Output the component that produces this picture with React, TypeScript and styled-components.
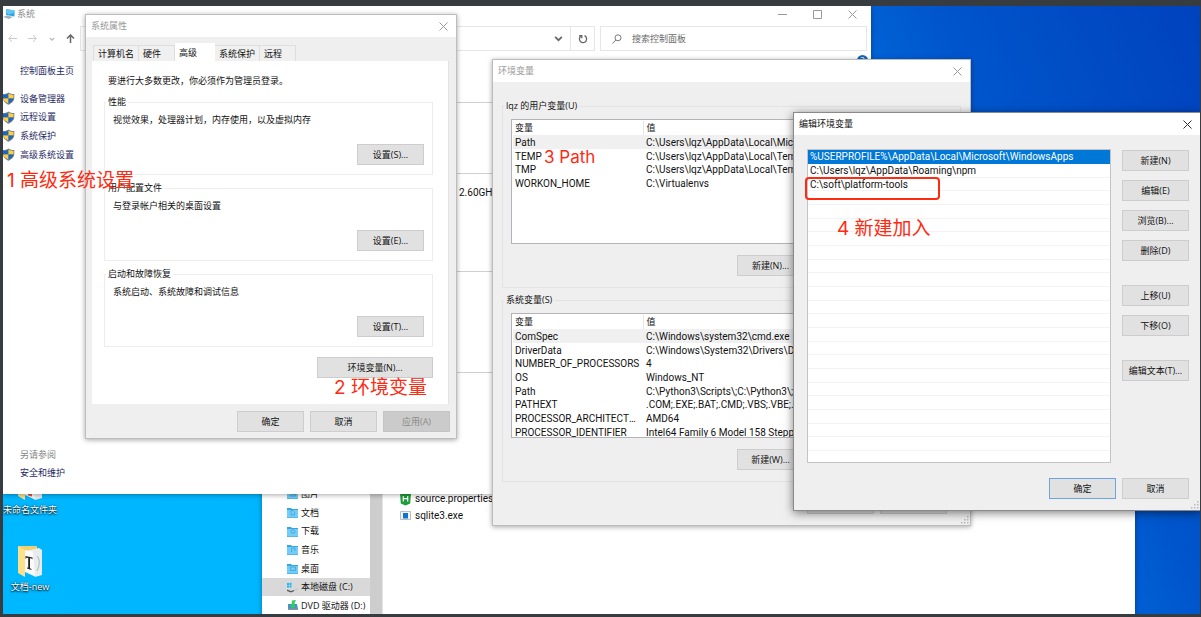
import React from "react";
import styled, { createGlobalStyle, css } from "styled-components";

const GlobalStyle = createGlobalStyle`
  *, *::before, *::after { box-sizing: border-box; }
  body {
    margin: 0;
    font-family: "Open Sans", "Noto Sans CJK SC", sans-serif;
    font-size: 9px;
    line-height: 12px;
    color: #111;
  }
  button, input { font: inherit; color: inherit; }
  ul { list-style: none; margin: 0; padding: 0; }
  h2 { margin: 0; font: inherit; }
  p { margin: 0; }
  a { color: inherit; text-decoration: none; }
  svg { display: block; flex: none; }
`;

/* names, paths and values are set in a slightly larger Latin face */
const dataText = css`
  font-family: Roboto, "Noto Sans CJK SC", sans-serif;
  font-size: 10px;
`;

const Frame = styled.main`
  height: 100vh;
  padding: 6px 1px 3px 3px;
  background: #373c40;
`;

const Desktop = styled.div`
  position: relative;
  height: 100%;
  overflow: hidden;
  background: linear-gradient(66deg, #00b8ff 0%, #00b4ff 30%, #0062d6 76%, #0055cc 82%, #0042bd 100%);
`;

/* ---------- windows ---------- */

const WindowFrame = styled.section<{ $x: number; $y: number; $w: number; $h?: number; $active?: boolean }>`
  position: absolute;
  left: ${(p) => p.$x}px;
  top: ${(p) => p.$y}px;
  width: ${(p) => p.$w}px;
  height: ${(p) => (p.$h ? `${p.$h}px` : "auto")};
  display: flex;
  flex-direction: column;
  overflow: hidden;
  background: #fff;
  box-shadow: 0 1px 5px rgba(0, 0, 0, 0.35);
`;

const DialogFrame = styled(WindowFrame)`
  background: #efefef;
  border: 1px solid ${(p) => (p.$active ? "#8a8a8a" : "#bdbdbd")};
  box-shadow: ${(p) => (p.$active ? "0 2px 9px rgba(0,0,0,.5)" : "0 1px 5px rgba(0,0,0,.35)")};
`;

const TitleBar = styled.header<{ $active?: boolean }>`
  display: flex;
  align-items: center;
  justify-content: space-between;
  flex: none;
  height: 22px;
  padding: 0 8px 0 5px;
  background: #fff;
  color: ${(p) => (p.$active ? "#111" : "#999")};
`;

const IconButton = styled.button`
  display: flex;
  padding: 0;
  border: 0;
  background: none;
`;

const PushButton = styled.button<{ $w?: number; $primary?: boolean }>`
  flex: none;
  width: ${(p) => p.$w ?? 67}px;
  height: 21px;
  padding: 0;
  border: 1px solid ${(p) => (p.$primary ? "#6ba4e0" : "#cdcdcd")};
  background: #e1e1e1;
  white-space: nowrap;
  &:disabled {
    background: #cbcbcb;
    border-color: #c4c4c4;
    color: #8b8b8b;
  }
`;

const ButtonRow = styled.div`
  display: flex;
  justify-content: flex-end;
  gap: 6px;
`;

const Grip = styled.div`
  position: absolute;
  right: 1px;
  bottom: 1px;
`;

/* ---------- system window ---------- */

const SystemTitle = styled.header`
  display: flex;
  align-items: center;
  justify-content: space-between;
  height: 20px;
  padding: 0 14px 4px 0;
  color: #8c8c8c;
`;

const TitleLabel = styled.div`
  display: flex;
  align-items: center;
  gap: 2px;
`;

const Caption = styled.div`
  display: flex;
  gap: 26px;
`;

const Toolbar = styled.div`
  display: flex;
  align-items: center;
  gap: 5px;
  height: 25px;
  padding-right: 4px;
`;

const NavButtons = styled.div`
  display: flex;
  align-items: center;
  justify-content: space-between;
  width: 72px;
  padding: 0 0 0 5px;
`;

const AddressBar = styled.div`
  display: flex;
  flex: 1;
  align-items: center;
  height: 25px;
  padding-left: 4px;
  border: 1px solid #e6e6e6;
`;

const AddressButton = styled(IconButton)<{ $divided?: boolean }>`
  align-items: center;
  justify-content: center;
  width: 24px;
  height: 23px;
  ${(p) => p.$divided && css`border-left: 1px solid #e6e6e6;`}
`;

const Spacer = styled.div`
  flex: 1;
`;

const SearchBox = styled.label`
  display: flex;
  align-items: center;
  gap: 10px;
  width: 267px;
  height: 25px;
  padding-left: 11px;
  border: 1px solid #e6e6e6;
`;

const SearchInput = styled.input`
  flex: 1;
  min-width: 0;
  padding: 0;
  border: 0;
  outline: 0;
  background: none;
  &::placeholder { color: #6a6a6a; opacity: 1; }
`;

const SystemBody = styled.div`
  display: flex;
  flex: 1;
`;

const SideNav = styled.nav`
  display: flex;
  flex-direction: column;
  width: 180px;
  padding: 14px 0 15px;
  color: #1f2a66;
`;

const SideHome = styled.a`
  padding: 0 17px;
  margin-bottom: 12px;
`;

const SideLink = styled.a`
  display: flex;
  align-items: center;
  gap: 5px;
  height: 19px;
  &:nth-of-type(3n) { height: 18px; }
`;

const SideFooter = styled.div`
  display: flex;
  flex-direction: column;
  gap: 6px;
  margin-top: auto;
  padding: 0 17px;
`;

const Muted = styled.span`
  color: #858585;
`;

const SystemMain = styled.div`
  position: relative;
  flex: 1;
`;

const InfoSection = styled.div<{ $h: number }>`
  ${dataText}
  height: ${(p) => p.$h}px;
  padding: 13px 0 0 276px;
  border-bottom: 1px solid #cfcfcf;
`;

const HelpBadge = styled.button`
  position: absolute;
  top: 4px;
  right: 3px;
  width: 11px;
  height: 11px;
  padding: 0;
  border: 0;
  border-radius: 50%;
  background: #1267b4;
  color: #fff;
  line-height: 11px;
`;

/* ---------- system properties ---------- */

const PropsBody = styled.div`
  display: flex;
  flex-direction: column;
  flex: 1;
  padding: 6px 6px 0;
`;

const TabStrip = styled.div`
  display: flex;
  align-items: flex-end;
  height: 18px;
  padding-left: 1px;
`;

const Tab = styled.button<{ $active?: boolean }>`
  min-width: 36px;
  height: ${(p) => (p.$active ? 18 : 16)}px;
  padding: 0 4px;
  border: 1px solid #dedede;
  border-width: 1px 1px 0 0;
  background: #f0f0f0;
  text-align: left;
  &:first-child { border-left-width: 1px; }
  ${(p) => p.$active && css`
    min-width: 40px;
    background: #fff;
    border-color: #fff;
  `}
`;

const TabPanel = styled.div`
  display: flex;
  flex-direction: column;
  height: 343px;
  margin-right: 1px;
  padding: 14px 15px 0 12px;
  background: #fff;
  border-right: 1px solid #e2e2e2;
`;

const Notice = styled.p`
  padding: 0 0 0 4px;
  margin-bottom: 9px;
`;

const Group = styled.fieldset<{ $h: number; $line?: string }>`
  display: flex;
  flex-direction: column;
  min-width: 0;
  height: ${(p) => p.$h}px;
  margin: 0;
  padding: 0 1px;
  border: 1px solid ${(p) => p.$line ?? "#ededed"};
`;

const Legend = styled.legend`
  padding: 0 2px;
`;

const SettingBody = styled.div`
  display: flex;
  flex-direction: column;
  justify-content: space-between;
  align-items: flex-end;
  height: 57px;
  padding: 6px 7px 0;
`;

const SettingText = styled.p`
  align-self: flex-start;
`;

const Groups = styled.div`
  display: flex;
  flex-direction: column;
  gap: 7px;
  margin-bottom: 10px;
`;

const PropsFooter = styled(ButtonRow)`
  padding-top: 7px;
`;

/* ---------- environment variables ---------- */

const EnvBody = styled.div`
  display: flex;
  flex-direction: column;
  gap: 6px;
  padding: 18px 9px 0;
`;

const EnvGroupBody = styled.div`
  display: flex;
  flex-direction: column;
  gap: 11px;
  padding: 7px 9px 0 7px;
`;

const TableBox = styled.div`
  height: 125px;
  overflow: hidden;
  padding: 1px 0 0 1px;
  border: 1px solid #b4b4b8;
  background: #fff;
`;

const VarTable = styled.table`
  width: 100%;
  table-layout: fixed;
  border-collapse: collapse;
  ${dataText}
  line-height: 13px;
  th, td {
    padding: 0 3px 0 2px;
    overflow: hidden;
    white-space: nowrap;
    text-overflow: ellipsis;
    text-align: left;
    font-weight: 400;
  }
  th { height: 14px; font-size: 9px; }
  th + th { border-left: 1px solid #e6e6e6; }
  td + td, th + th { padding-left: 3px; }
  tbody tr { height: 14px; }
  tbody tr:nth-child(3n) { height: 13px; }
  tbody tr:first-child { background: #f0f0f0; }
`;

const EnvFooter = styled(ButtonRow)`
  padding: 5px 14px 0 0;
`;

/* ---------- edit dialog ---------- */

const EditBody = styled.div`
  display: flex;
  gap: 11px;
  padding: 14px 11px 0 13px;
`;

const PathList = styled.ul`
  flex: 1;
  height: 314px;
  overflow: hidden;
  border: 1px solid #c4c4c8;
  background: #fff;
  ${dataText}
  line-height: 14px;
`;

const PathItem = styled.li<{ $selected?: boolean }>`
  height: 14px;
  padding: 0 2px;
  border-bottom: 1px solid #f3f3f3;
  white-space: nowrap;
  &:nth-child(3n) { height: 13px; }
  ${(p) => p.$selected && css`
    background: #0078d7;
    border-color: #0078d7;
    color: #fff;
  `}
`;

const EditActions = styled.div`
  display: flex;
  flex-direction: column;
  gap: 24px;
  padding-top: 1px;
`;

const ActionGroup = styled.div`
  display: flex;
  flex-direction: column;
  gap: 9px;
`;

const EditFooter = styled(ButtonRow)`
  padding: 15px 11px 0 0;
`;

/* ---------- file explorer and desktop icons ---------- */

const ExplorerBody = styled.div`
  display: flex;
  height: 100%;
`;

const Tree = styled.ul`
  width: 108px;
`;

const TreeItem = styled.li<{ $selected?: boolean }>`
  display: flex;
  align-items: center;
  gap: 3px;
  height: 19px;
  padding-left: 25px;
  white-space: nowrap;
  background: ${(p) => (p.$selected ? "#d9d9d9" : "transparent")};
  &:nth-child(3n) { height: 18px; }
`;

const ScrollTrack = styled.div`
  width: 13px;
  background: #cdcdcd;
  border-right: 1px solid #e6e6e6;
`;

const Files = styled.ul`
  flex: 1;
  padding: 6px 0 0 17px;
`;

const FileItem = styled.li`
  display: flex;
  align-items: center;
  gap: 4px;
  height: 17px;
  ${dataText}
`;

const DesktopIcon = styled.a<{ $y: number }>`
  position: absolute;
  left: -13px;
  top: ${(p) => p.$y}px;
  display: flex;
  flex-direction: column;
  align-items: center;
  gap: 3px;
  width: 80px;
  color: #fff;
  text-shadow: 0 1px 2px #000, 0 0 2px rgba(0, 0, 0, 0.7);
`;

/* ---------- annotations ---------- */

const Note = styled.span<{ $x: number; $y: number; $latin?: boolean }>`
  position: absolute;
  left: ${(p) => p.$x}px;
  top: ${(p) => p.$y}px;
  font-family: Inter, "Noto Sans CJK SC", sans-serif;
  font-size: ${(p) => (p.$latin ? 17 : 19)}px;
  line-height: 24px;
  white-space: nowrap;
  color: #ff2a10;
`;

const Highlight = styled.div`
  position: absolute;
  left: 802px;
  top: 171px;
  width: 135px;
  height: 23px;
  border: 2px solid #ff2a10;
  border-radius: 4px;
`;

/* ---------- icons ---------- */

const CloseIcon = ({ color = "#999" }: { color?: string }) => (
  <svg width="9" height="9" viewBox="0 0 9 9" stroke={color} fill="none"><path d="M.5.5l8 8M8.5.5l-8 8" /></svg>
);

const ShieldIcon = () => (
  <svg width="12" height="13" viewBox="0 0 12 13">
    <path d="M5.500 .5C4 1.700 2 2 0 2v4c0 3 2.500 5.500 5.500 6.700C8.500 11.500 11.300 9 11.300 6V2C9 2 7 1.700 5.500.5z" fill="#6f7f91" />
    <path d="M5.500 1.600V6.500H0V3C2.500 3 4 2.600 5.500 1.600z" fill="#1c68c0" />
    <path d="M5.500 1.600V6.500h5V3C8.500 3 7 2.600 5.500 1.600z" fill="#ffcf3e" />
    <path d="M0 6.500h5.500v5C3 10.400.5 8.800 0 6.500z" fill="#ffcf3e" />
    <path d="M5.500 6.500h5c-.4 2.300-2.500 3.900-5 5z" fill="#1c68c0" />
  </svg>
);

const PcIcon = () => (
  <svg width="12" height="12" viewBox="0 0 12 12">
    <path d="M3 1l8.500 1.500v6L3 7z" fill="#27a5e4" />
    <path d="M3 1l8.500 1.500v2L6 6.500 3 5z" fill="#63c5f2" />
    <path d="M0 9l4-1.500 6 1.500-4 2z" fill="#a4b2bd" />
  </svg>
);

const ArrowIcon = ({ dir, color }: { dir: "left" | "right" | "up"; color: string }) => (
  <svg width="9" height="9" viewBox="0 0 9 9" fill="none" stroke={color} strokeWidth={dir === "up" ? 1.5 : 1}>
    {dir === "left" && <path d="M9 4.500H1M4 1L.8 4.500 4 8" />}
    {dir === "right" && <path d="M0 4.500h8M5 1l3.200 3.500L5 8" />}
    {dir === "up" && <path d="M4.500 9V1M1 4.500L4.500 1 8 4.500" />}
  </svg>
);

const ChevronIcon = ({ size, color, weight }: { size: number; color: string; weight: number }) => (
  <svg width={size} height={size} viewBox="0 0 8 8" fill="none" stroke={color} strokeWidth={weight}>
    <path d="M1 2.500l3 3 3-3" />
  </svg>
);

const RefreshIcon = () => (
  <svg width="10" height="10" viewBox="0 0 10 10" fill="none" stroke="#666" strokeWidth="1.300">
    <path d="M6.500 1.700A3.600 3.600 0 1 1 3 2M1.200 1.600h2.600v2.600" />
  </svg>
);

const SearchIcon = () => (
  <svg width="10" height="10" viewBox="0 0 10 10" fill="none" stroke="#777">
    <circle cx="6" cy="3.800" r="3" /><path d="M3.900 6L.5 9.500" />
  </svg>
);

const GripIcon = () => (
  <svg width="8" height="8" viewBox="0 0 8 8" fill="#b8b8b8">
    <path d="M6 0h1.500v1.500H6zM6 3h1.500v1.500H6zM6 6h1.500v1.500H6zM3 3h1.500v1.500H3zM3 6h1.500v1.500H3zM0 6h1.500v1.500H0z" />
  </svg>
);

const glyphs: Record<string, string> = {
  picture: "M3 8l2-2.500L7 7l1-1 1 2z",
  doc: "M4 3.500h2l1.500 1.500v3H4z",
  download: "M4 5.500a2 1.800 0 1 0 4 0 2 1.800 0 1 0-4 0z",
  music: "M4.500 8V4.500L8 3.800V7",
  desktop: "M3.500 4h5v3.500h-5z",
};

const TreeIcon = ({ kind }: { kind: string }) => {
  if (kind === "disk")
    return (
      <svg width="11" height="11" viewBox="0 0 11 11">
        <path d="M0 1h2v2H0zM2.500.7h2V3h-2zM0 3.500h2v2H0zM2.500 3.500h2v2h-2z" fill="#1fb6f5" />
        <path d="M0 7.500l4 1.500 7-3V5L6 6.500z" fill="#d4d8db" /><path d="M0 7.500V9l4 1.500 3-1.200V8L4 9z" fill="#555d63" />
        <path d="M7 8v1.300L11 7.500V6z" fill="#c3c8cc" />
      </svg>
    );
  if (kind === "dvd")
    return (
      <svg width="11" height="11" viewBox="0 0 11 11">
        <path d="M1 4h9l1 5H1z" fill="#4a90c9" /><path d="M1 8.500h10V10H1z" fill="#8696a5" />
        <path d="M5 .5L9 0 7.500 3v3H9L5.500 8.500 3 5.500h1.500z" fill="#2bd158" />
      </svg>
    );
  return (
    <svg width="11" height="11" viewBox="0 0 11 11">
      <path d="M0 1h4l1 1h6v9H0z" fill="#35a4df" /><path d="M0 3h11v7.500H0z" fill="#74cdf6" />
      <path d={glyphs[kind]} fill="none" stroke="#2b93cf" strokeWidth=".6" />
    </svg>
  );
};

const PropertiesIcon = () => (
  <svg width="11" height="14" viewBox="0 0 11 14">
    <path d="M0 1h11l-.8 10.500L5.500 13.500.8 11.500z" fill="#1e9e3a" />
    <path d="M3.300 4v5.500M7.700 4v5.500M3.300 6.700h4.400" stroke="#fff" strokeWidth="1.200" />
  </svg>
);

const ExeIcon = () => (
  <svg width="11" height="9" viewBox="0 0 11 9">
    <path d="M.5.500h10v8H.5z" fill="#f4f4f4" stroke="#b9bdc0" /><path d="M3 2h5v5.500H3z" fill="#0c74d4" />
  </svg>
);

const FolderIcon = ({ letter }: { letter?: boolean }) => (
  <svg width="26" height="34" viewBox="0 0 26 34">
    <path d="M1 2h19v26H7z" fill="#f0cf6e" />
    <path d="M8 7l14-3 3 2v25l-7 2z" fill="#e9eced" />
    <path d="M7 6l9 1.500 2 25L8 28z" fill="#fbfbfb" />
    <path d="M1 2l7 4v27l-7-4z" fill="#ffe08a" />
    {letter
      ? <path d="M8.500 12l7 1.500v2l-1-1-1.500-.2v10l1.500.7v1l-4.500-1.500v-1l1.200.2V13.800l-1.700-.1-1 1.200z" fill="#222" />
      : <path d="M11 25l4 1.500v3l-4-1z" fill="#e2574c" />}
    <path d="M20 12c3 3 3 9 0 15" fill="none" stroke="#a9b4ba" />
  </svg>
);

/* ---------- data ---------- */

const userVars = [
  ["Path", "C:\\Users\\lqz\\AppData\\Local\\Microsoft\\WindowsApps"],
  ["TEMP", "C:\\Users\\lqz\\AppData\\Local\\Temp"],
  ["TMP", "C:\\Users\\lqz\\AppData\\Local\\Temp"],
  ["WORKON_HOME", "C:\\Virtualenvs"],
];

const systemVars = [
  ["ComSpec", "C:\\Windows\\system32\\cmd.exe"],
  ["DriverData", "C:\\Windows\\System32\\Drivers\\DriverData"],
  ["NUMBER_OF_PROCESSORS", "4"],
  ["OS", "Windows_NT"],
  ["Path", "C:\\Python3\\Scripts\\;C:\\Python3\\;C:\\Windows"],
  ["PATHEXT", ".COM;.EXE;.BAT;.CMD;.VBS;.VBE;.JS;.JSE"],
  ["PROCESSOR_ARCHITECTURE", "AMD64"],
  ["PROCESSOR_IDENTIFIER", "Intel64 Family 6 Model 158 Stepping 10"],
];

const pathEntries = [
  "%USERPROFILE%\\AppData\\Local\\Microsoft\\WindowsApps",
  "C:\\Users\\lqz\\AppData\\Roaming\\npm",
  "C:\\soft\\platform-tools",
  ...Array<string>(20).fill(""),
];

const settings = [
  ["性能", "视觉效果，处理器计划，内存使用，以及虚拟内存", "设置(S)..."],
  ["用户配置文件", "与登录帐户相关的桌面设置", "设置(E)..."],
  ["启动和故障恢复", "系统启动、系统故障和调试信息", "设置(T)..."],
];

const tree = [
  ["picture", "图片"], ["doc", "文档"], ["download", "下载"], ["music", "音乐"],
  ["desktop", "桌面"], ["disk", "本地磁盘 (C:)"], ["dvd", "DVD 驱动器 (D:)"],
];

const sideLinks = ["设备管理器", "远程设置", "系统保护", "高级系统设置"];
const tabs = ["计算机名", "硬件", "高级", "系统保护", "远程"];

/* ---------- parts ---------- */

const Variables = ({ title, rows, keys }: { title: string; rows: string[][]; keys: string[] }) => (
  <Group $h={188} $line="#e3e3e3">
    <Legend>{title}</Legend>
    <EnvGroupBody>
      <TableBox>
        <VarTable>
          <colgroup><col width="130" /><col /></colgroup>
          <thead><tr><th>变量</th><th>值</th></tr></thead>
          <tbody>
            {rows.map(([name, value]) => <tr key={name}><td>{name}</td><td>{value}</td></tr>)}
          </tbody>
        </VarTable>
      </TableBox>
      <ButtonRow>
        {keys.map((k) => <PushButton key={k}>{k}</PushButton>)}
      </ButtonRow>
    </EnvGroupBody>
  </Group>
);

const Explorer = () => (
  <WindowFrame $x={259} $y={478} $w={873} $h={160}>
    <ExplorerBody>
      <Tree>
        {tree.map(([kind, label]) => (
          <TreeItem key={label} $selected={kind === "disk"}><TreeIcon kind={kind} />{label}</TreeItem>
        ))}
      </Tree>
      <ScrollTrack />
      <Files>
        <FileItem><PropertiesIcon />source.properties</FileItem>
        <FileItem><ExeIcon />sqlite3.exe</FileItem>
      </Files>
    </ExplorerBody>
  </WindowFrame>
);

const SystemWindow = () => (
  <WindowFrame $x={0} $y={0} $w={868} $h={488}>
    <SystemTitle>
      <TitleLabel><PcIcon /><h2>系统</h2></TitleLabel>
      <Caption>
        <IconButton aria-label="最小化"><svg width="9" height="9" stroke="#999"><path d="M0 4.500h9" /></svg></IconButton>
        <IconButton aria-label="最大化"><svg width="9" height="9" stroke="#999" fill="none"><path d="M.5.500h8v8h-8z" /></svg></IconButton>
        <IconButton aria-label="关闭"><CloseIcon /></IconButton>
      </Caption>
    </SystemTitle>
    <Toolbar>
      <NavButtons>
        <IconButton aria-label="后退"><ArrowIcon dir="left" color="#c9c9c9" /></IconButton>
        <IconButton aria-label="前进"><ArrowIcon dir="right" color="#c9c9c9" /></IconButton>
        <IconButton aria-label="历史"><ChevronIcon size={6} color="#b5b5b5" weight={1.5} /></IconButton>
        <IconButton aria-label="向上"><ArrowIcon dir="up" color="#666" /></IconButton>
      </NavButtons>
      <AddressBar>
        <PcIcon />
        <Spacer />
        <AddressButton aria-label="展开"><ChevronIcon size={9} color="#666" weight={1.5} /></AddressButton>
        <AddressButton $divided aria-label="刷新"><RefreshIcon /></AddressButton>
      </AddressBar>
      <SearchBox><SearchIcon /><SearchInput type="text" placeholder="搜索控制面板" aria-label="搜索控制面板" /></SearchBox>
    </Toolbar>
    <SystemBody>
      <SideNav>
        <SideHome href="#">控制面板主页</SideHome>
        {sideLinks.map((l) => <SideLink key={l} href="#"><ShieldIcon />{l}</SideLink>)}
        <SideFooter><Muted>另请参阅</Muted><a href="#">安全和维护</a></SideFooter>
      </SideNav>
      <SystemMain>
        <HelpBadge aria-label="帮助">?</HelpBadge>
        <InfoSection $h={52} />
        <InfoSection $h={71} />
        <InfoSection $h={98}>2.60GHz</InfoSection>
        <InfoSection $h={101} />
      </SystemMain>
    </SystemBody>
  </WindowFrame>
);

const SystemProperties = () => (
  <DialogFrame $x={82} $y={8} $w={372} $h={425}>
    <TitleBar><h2>系统属性</h2><IconButton aria-label="关闭"><CloseIcon /></IconButton></TitleBar>
    <PropsBody>
      <TabStrip role="tablist">
        {tabs.map((t) => <Tab key={t} role="tab" $active={t === "高级"} aria-selected={t === "高级"}>{t}</Tab>)}
      </TabStrip>
      <TabPanel role="tabpanel">
        <Notice>要进行大多数更改，你必须作为管理员登录。</Notice>
        <Groups>
          {settings.map(([name, text, key]) => (
            <Group key={name} $h={79}>
              <Legend>{name}</Legend>
              <SettingBody><SettingText>{text}</SettingText><PushButton>{key}</PushButton></SettingBody>
            </Group>
          ))}
        </Groups>
        <ButtonRow><PushButton $w={116}>环境变量(N)...</PushButton></ButtonRow>
      </TabPanel>
      <PropsFooter>
        <PushButton>确定</PushButton><PushButton>取消</PushButton><PushButton disabled>应用(A)</PushButton>
      </PropsFooter>
    </PropsBody>
  </DialogFrame>
);

const EnvironmentVariables = () => (
  <DialogFrame $x={489} $y={53} $w={479} $h={467}>
    <TitleBar><h2>环境变量</h2><IconButton aria-label="关闭"><CloseIcon /></IconButton></TitleBar>
    <EnvBody>
      <Variables title="lqz 的用户变量(U)" rows={userVars} keys={["新建(N)...", "编辑(E)...", "删除(D)"]} />
      <Variables title="系统变量(S)" rows={systemVars} keys={["新建(W)...", "编辑(I)...", "删除(L)"]} />
      <EnvFooter><PushButton>确定</PushButton><PushButton>取消</PushButton></EnvFooter>
    </EnvBody>
    <Grip><GripIcon /></Grip>
  </DialogFrame>
);

const EditVariable = () => (
  <DialogFrame $x={790} $y={106} $w={408} $h={399} $active>
    <TitleBar $active><h2>编辑环境变量</h2><IconButton aria-label="关闭"><CloseIcon color="#333" /></IconButton></TitleBar>
    <EditBody>
      <PathList>
        {pathEntries.map((p, i) => <PathItem key={i} $selected={i === 0}>{p}</PathItem>)}
      </PathList>
      <EditActions>
        <ActionGroup>
          {["新建(N)", "编辑(E)", "浏览(B)...", "删除(D)"].map((k) => <PushButton key={k}>{k}</PushButton>)}
        </ActionGroup>
        <ActionGroup>
          {["上移(U)", "下移(O)"].map((k) => <PushButton key={k}>{k}</PushButton>)}
        </ActionGroup>
        <PushButton>编辑文本(T)...</PushButton>
      </EditActions>
    </EditBody>
    <EditFooter><PushButton $primary>确定</PushButton><PushButton>取消</PushButton></EditFooter>
    <Grip><GripIcon /></Grip>
  </DialogFrame>
);

export default function App() {
  return (
    <>
      <GlobalStyle />
      <Frame>
        <Desktop>
          <DesktopIcon href="#" $y={461}><FolderIcon />未命名文件夹</DesktopIcon>
          <DesktopIcon href="#" $y={538}><FolderIcon letter />文档-new</DesktopIcon>
          <Explorer />
          <SystemWindow />
          <SystemProperties />
          <EnvironmentVariables />
          <EditVariable />
          <Highlight />
          <Note $x={4} $y={163}>1 高级系统设置</Note>
          <Note $x={331} $y={370}>2 环境变量</Note>
          <Note $x={541} $y={139} $latin>3 Path</Note>
          <Note $x={834} $y={211}>4 新建加入</Note>
        </Desktop>
      </Frame>
    </>
  );
}
